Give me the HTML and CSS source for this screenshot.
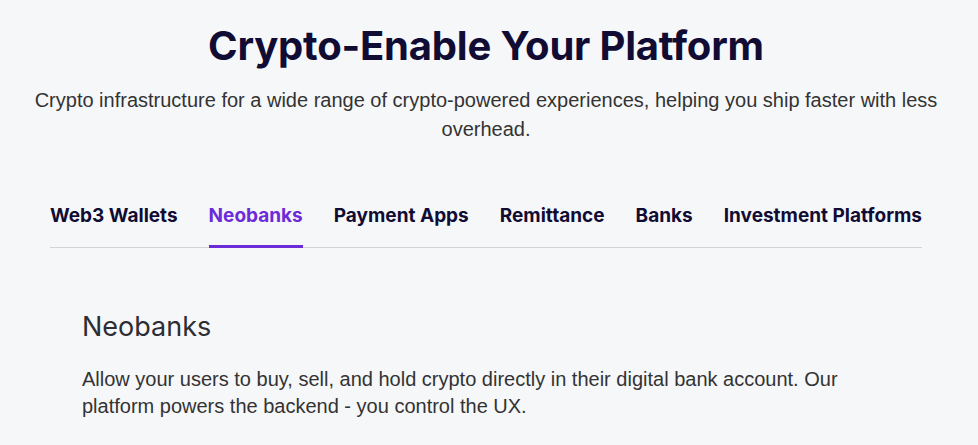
FILE: index.html
```html
<!DOCTYPE html>
<html>
	<head>
		<meta charset="UTF-8">
		<title>Crypto-Enable Your Platform</title>
		<link rel="stylesheet" href="styles.css">
	</head>
	<body>
		<div class="section">
			<h1 class="title">Crypto-Enable Your Platform</h1>
			<p class="lead">Crypto infrastructure for a wide range of crypto-powered experiences, helping you ship faster with less overhead.</p>

			<div class="tabs">
				<a href="javascript:" class="tab">Web3 Wallets</a>
				<a href="javascript:" class="tab active">Neobanks</a>
				<a href="javascript:" class="tab">Payment Apps</a>
				<a href="javascript:" class="tab">Remittance</a>
				<a href="javascript:" class="tab">Banks</a>
				<a href="javascript:" class="tab">Investment Platforms</a>
			</div>

			<div class="panel">
				<h2 class="panel-title">Neobanks</h2>
				<p class="panel-text">Allow your users to buy, sell, and hold crypto directly in their digital bank account. Our platform powers the backend - you control the UX.</p>
			</div>
		</div>
	</body>
</html>
```

FILE: styles.css
```css
body{ margin: 0; background-color: #f6f7f9; font-family: "Liberation Sans", Arial, sans-serif;}
.section{ width: 872px; margin: 0 56px 0 50px; padding-top: 22px;}
.title{ margin: 0; text-align: center; font: 700 40px/48px Inter, "Noto Sans", sans-serif; letter-spacing: -0.2px; color: #110c33;}
.lead{ margin: 16px -20px 0; text-align: center; font-size: 20px; line-height: 29px; color: #333;}
.tabs{ display: flex; justify-content: space-between; margin-top: 55px; border-bottom: 1px solid #d4d4d8;}
.tab{ padding: 6px 0 18px; border-bottom: 3px solid transparent; margin-bottom: -1px; text-decoration: none; font: 700 19px/22px Inter, "Noto Sans", sans-serif; color: #110c33;}
.tab.active{ color: #6c2bd9; border-bottom-color: #6c2bd9;}
.panel{ padding: 63px 32px 0;}
.panel-title{ margin: 0; font: 400 27px/32px Inter, "Noto Sans", sans-serif; color: #2d2d33;}
.panel-text{ margin: 23px 0 0; max-width: 780px; font-size: 20px; line-height: 27px; color: #333;}
```
